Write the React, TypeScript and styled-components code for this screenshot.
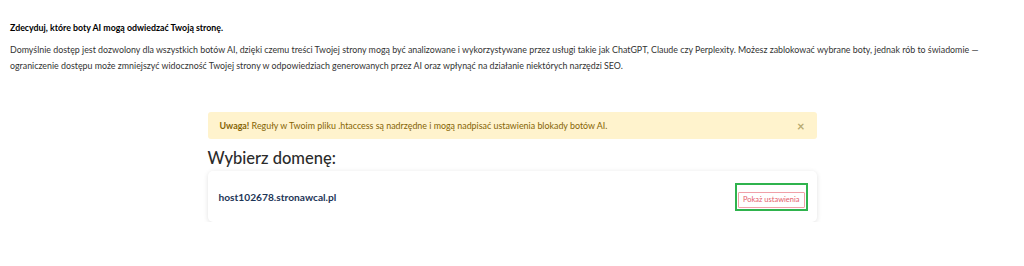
import React from "react";
import styled, { createGlobalStyle } from "styled-components";

const Global = createGlobalStyle`
  html, body { margin: 0; padding: 0; background: #ffffff; }
  body { font-family: Lato, "Open Sans", Arial, sans-serif; color: #212529; }
  * { box-sizing: border-box; }
`;

const Page = styled.div`
  padding: 21px 10px 0 10px;
`;

const Intro = styled.section`
  display: flex;
  flex-direction: column;
  gap: 7px;
`;

const Title = styled.h4`
  margin: 0;
  font-size: 8.8px;
  line-height: 14px;
  font-weight: 700;
  color: #000;
`;

const Lead = styled.p`
  margin: 0;
  font-size: 8.86px;
  line-height: 16px;
  color: #333;
`;

const Panel = styled.section`
  width: 609px;
  margin: 38px auto 0;
  display: flex;
  flex-direction: column;
`;

const Alert = styled.div`
  height: 27px;
  display: flex;
  align-items: center;
  justify-content: space-between;
  padding: 0 12px 0 12px;
  background: #fff3cd;
  border-radius: 3px;
  font-size: 8.9px;
  color: #856404;
`;

const Close = styled.span`
  font-size: 13px;
  font-weight: 700;
  color: #b8aa70;
  line-height: 1;
  margin-top: 2px;
`;

const Heading = styled.h3`
  margin: 9px 0 3px;
  font-size: 16.5px;
  line-height: 20px;
  font-weight: 500;
  color: #2b2b2b;
`;

const Card = styled.div`
  height: 51px;
  display: flex;
  align-items: center;
  justify-content: space-between;
  padding: 0 9px 0 11px;
  background: #fff;
  border-radius: 5px;
  box-shadow: 0 1px 5px rgba(0, 0, 0, 0.12);
`;

const Domain = styled.span`
  font-size: 10.2px;
  font-weight: 700;
  color: #1d3557;
`;

const Focus = styled.div`
  padding: 1px;
  border: 2px solid #2fb34d;
`;

const OutlineButton = styled.button`
  font-family: inherit;
  font-size: 7.5px;
  line-height: 10px;
  padding: 2px 4px;
  color: #e4606d;
  background: #fff;
  border: 1px solid #f0a0a8;
  border-radius: 1px;
  cursor: pointer;
`;

export default function App() {
  return (
    <>
      <Global />
      <Page>
        <Intro>
          <Title>Zdecyduj, które boty AI mogą odwiedzać Twoją stronę.</Title>
          <Lead>
            Domyślnie dostęp jest dozwolony dla wszystkich botów AI, dzięki czemu treści Twojej strony mogą być analizowane i wykorzystywane przez usługi takie jak ChatGPT, Claude czy Perplexity. Możesz zablokować wybrane boty, jednak rób to świadomie — ograniczenie dostępu może zmniejszyć widoczność Twojej strony w odpowiedziach generowanych przez AI oraz wpłynąć na działanie niektórych narzędzi SEO.
          </Lead>
        </Intro>
        <Panel>
          <Alert>
            <span>
              <b>Uwaga!</b> Reguły w Twoim pliku .htaccess są nadrzędne i mogą nadpisać ustawienia blokady botów AI.
            </span>
            <Close>×</Close>
          </Alert>
          <Heading>Wybierz domenę:</Heading>
          <Card>
            <Domain>host102678.stronawcal.pl</Domain>
            <Focus>
              <OutlineButton>Pokaż ustawienia</OutlineButton>
            </Focus>
          </Card>
        </Panel>
      </Page>
    </>
  );
}
